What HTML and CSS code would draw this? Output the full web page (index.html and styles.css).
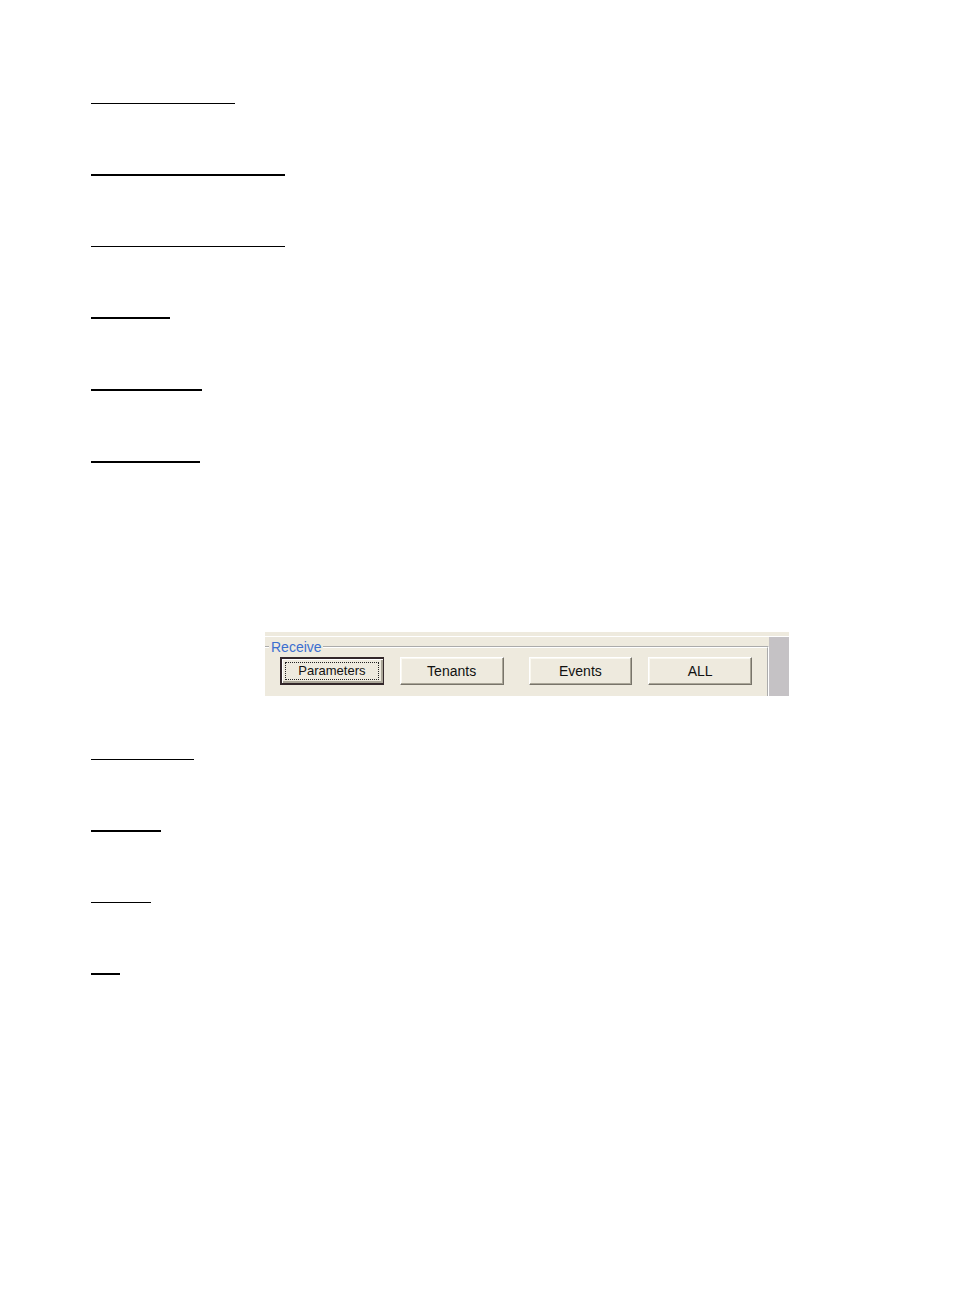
FILE: index.html
```
<!DOCTYPE html>
<html lang="en">
<head>
    <meta charset="UTF-8">
    <meta name="viewport" content="width=device-width, initial-scale=1.0">
    <title>Receive</title>
    <link rel="stylesheet" href="styles.css">
</head>
<body>
    <main class="page">
        <div class="rules">
            <hr class="rule w-144">
            <hr class="rule thick w-194">
            <hr class="rule w-194">
            <hr class="rule thick w-79">
            <hr class="rule thick w-111">
            <hr class="rule thick w-109">
        </div>

        <div class="panel">
            <div class="panel-body">
                <fieldset class="receive">
                    <legend>Receive</legend>
                    <div class="buttons">
                        <div class="pair">
                            <button type="button" class="btn selected"><span>Parameters</span></button>
                            <button type="button" class="btn">Tenants</button>
                        </div>
                        <div class="pair">
                            <button type="button" class="btn">Events</button>
                            <button type="button" class="btn">ALL</button>
                        </div>
                    </div>
                </fieldset>
            </div>
            <div class="panel-edge"></div>
        </div>

        <div class="rules">
            <hr class="rule w-103">
            <hr class="rule thick w-70">
            <hr class="rule w-60">
            <hr class="rule thick w-29">
        </div>
    </main>
</body>
</html>
```
FILE: styles.css
```
* {
    box-sizing: border-box;
}
body {
    margin: 0;
    background: #fff;
    font-family: "Liberation Sans", Arial, sans-serif;
}
.page {
    padding: 103px 91px;
}

/* underlines */
.rules {
    display: flex;
    flex-direction: column;
    gap: 70px;
}
.rule {
    height: 1px;
    margin: 0;
    border: 0;
    background: #000;
}
.thick {
    height: 2px;
}
.w-29 { width: 29px; }
.w-60 { width: 60px; }
.w-70 { width: 70px; }
.w-79 { width: 79px; }
.w-103 { width: 103px; }
.w-109 { width: 109px; }
.w-111 { width: 111px; }
.w-144 { width: 144px; }
.w-194 { width: 194px; }

/* receive panel */
.panel {
    display: flex;
    max-width: 524px;
    margin: 169px 0 63px 174px;
    border-top: 4px solid #eeeade;
    background: #eeeade;
}
.panel-body {
    flex: 1;
    padding: 2px 0 0;
    border-top: 1px solid #fff;
}
.panel-edge {
    width: 20px;
    border-top: 1px solid #fff;
    background: #c5c2c5;
}
.receive {
    min-width: 0;
    margin: 0;
    padding: 2px 15px 11px;
    border: 2px groove #fff;
    border-left: 0;
    border-bottom: 0;
}
.receive legend {
    margin-left: -11px;
    padding: 0 1px 0 2px;
    color: #3c6fd0;
    font-size: 14px;
    line-height: 16px;
}
.buttons {
    display: grid;
    grid-template-columns: 1fr 1fr;
    gap: 25px;
}
.pair {
    display: grid;
    grid-template-columns: 1fr 1fr;
    gap: 16px;
}
.btn {
    height: 28px;
    padding: 0;
    border: 1px solid;
    border-color: #fff #78746a #78746a #fff;
    box-shadow: inset -1px -1px #aaa698, inset 1px 1px #faf8f0;
    background: #eeeade;
    color: #111;
    font-family: inherit;
    font-size: 14px;
    line-height: 16px;
}
.selected {
    padding: 2px;
    border: 2px solid #33272a;
    border-right-width: 1px;
    box-shadow: inset 1px 1px #fff, inset -2px -2px #aaa698;
    font-size: 13px;
}
.selected span {
    display: block;
    margin: 0 2px 0 1px;
    border: 1px dotted #222;
}
```
